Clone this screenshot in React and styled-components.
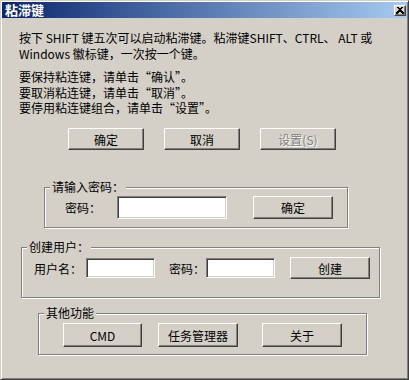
import styled, { createGlobalStyle } from "styled-components";

const GlobalStyle = createGlobalStyle`
  html, body { margin: 0; padding: 0; background: #d4d0c8; }
  body {
    font-family: "Noto Sans CJK SC", "Liberation Sans", sans-serif;
    font-size: 12px;
    color: #000;
  }
`;

const Window = styled.div`
  width: 409px;
  height: 380px;
  box-sizing: border-box;
  background: #d4d0c8;
  border: 1px solid;
  border-color: #d4d0c8 #404040 #404040 #d4d0c8;
  box-shadow: inset 1px 1px #fff, inset -1px -1px #808080;
  padding: 1px;
  display: flex;
  flex-direction: column;
`;

const TitleBar = styled.div`
  height: 16px;
  display: flex;
  align-items: center;
  justify-content: space-between;
  padding: 0 1px 0 3px;
  background: linear-gradient(90deg, #0a246a 0%, #3a5a98 30%, #a6caf0 100%);
`;

const Title = styled.span`
  color: #fff;
  font-weight: bold;
  font-size: 13px;
  line-height: 16px;
`;

const CloseButton = styled.div`
  width: 12px;
  height: 11px;
  box-sizing: border-box;
  background: #d4d0c8;
  border: 1px solid;
  border-color: #fff #404040 #404040 #fff;
  box-shadow: inset -1px -1px #808080;
  display: flex;
  align-items: center;
  justify-content: center;
`;

const Body = styled.div`
  display: flex;
  flex-direction: column;
  padding-top: 12px;
`;

const Para = styled.p`
  margin: ${p => p.$mt || 0}px 0 0 17px;
  line-height: ${p => p.$lh}px;
  white-space: nowrap;
`;

const ButtonRow = styled.div`
  display: flex;
  gap: 20px;
  margin: 12.5px 0 0 66px;
`;

const Button = styled.button`
  width: ${p => p.$w}px;
  height: ${p => p.$h}px;
  margin-left: ${p => p.$ml || 0}px;
  flex-shrink: 0;
  box-sizing: border-box;
  padding: 0;
  font-family: inherit;
  font-size: 12px;
  color: ${p => (p.disabled ? "#808080" : "#000")};
  text-shadow: ${p => (p.disabled ? "1px 1px #fff" : "none")};
  background: #d4d0c8;
  border: 1px solid;
  border-color: #fff #404040 #404040 #fff;
  box-shadow: inset -1px -1px #808080;
`;

const Group = styled.div`
  position: relative;
  box-sizing: border-box;
  width: ${p => p.$w}px;
  margin: ${p => p.$mt}px 0 0 ${p => p.$ml}px;
  padding: ${p => p.$pt}px 0 ${p => p.$pb}px ${p => p.$pl}px;
  border: 1px solid #808080;
  box-shadow: inset 1px 1px #fff, 1px 1px #fff;
  display: flex;
  align-items: center;
`;

const GroupTitle = styled.span`
  position: absolute;
  top: -9px;
  left: 5px;
  padding: 0 2px;
  line-height: 16px;
  background: #d4d0c8;
  white-space: nowrap;
`;

const Label = styled.span`
  flex-shrink: 0;
  margin-left: ${p => p.$ml || 0}px;
  white-space: nowrap;
`;

const Input = styled.input`
  width: ${p => p.$w}px;
  height: ${p => p.$h}px;
  margin-left: ${p => p.$ml || 0}px;
  flex-shrink: 0;
  box-sizing: border-box;
  padding: 0 3px;
  font-family: inherit;
  font-size: 12px;
  background: #fff;
  border: 1px solid;
  border-color: #808080 #fff #fff #808080;
  box-shadow: inset 1px 1px #404040, inset -1px -1px #d4d0c8;
  outline: none;
`;

export default function App() {
  return (
    <>
      <GlobalStyle />
      <Window>
        <TitleBar>
          <Title>粘滞键</Title>
          <CloseButton>
            <svg width="8" height="7" viewBox="0 0 8 7">
              <path d="M1 0h2v1h2V0h2v1H6v1H5v1h1v1h1v1h1v2H6V6H5V5H3v1H2v1H0V5h1V4h1V3h1V2H2V1H1z" fill="#000" transform="translate(0 0)" />
            </svg>
          </CloseButton>
        </TitleBar>
        <Body>
          <Para $lh={16}>
            按下 SHIFT 键五次可以启动粘滞键。粘滞键SHIFT、CTRL、 ALT 或
            <br />
            Windows 徽标键，一次按一个键。
          </Para>
          <Para $lh={15.5} $mt={7}>
            要保持粘连键，请单击“确认”。
            <br />
            要取消粘连键，请单击“取消”。
            <br />
            要停用粘连键组合，请单击“设置”。
          </Para>
          <ButtonRow>
            <Button $w={76} $h={22}>确定</Button>
            <Button $w={76} $h={22}>取消</Button>
            <Button $w={76} $h={22} disabled>设置(S)</Button>
          </ButtonRow>

          <Group $w={304} $mt={37} $ml={42} $pt={8} $pb={8} $pl={20}>
            <GroupTitle>请输入密码：</GroupTitle>
            <Label>密码：</Label>
            <Input $w={110} $h={23} $ml={16} />
            <Button $w={80} $h={23} $ml={26}>确定</Button>
          </Group>

          <Group $w={359} $mt={19} $ml={19} $pt={9} $pb={18} $pl={12}>
            <GroupTitle>创建用户：</GroupTitle>
            <Label>用户名：</Label>
            <Input $w={69} $h={20} $ml={4} />
            <Label $ml={14}>密码：</Label>
            <Input $w={69} $h={20} $ml={1} />
            <Button $w={80} $h={22} $ml={15}>创建</Button>
          </Group>

          <Group $w={329} $mt={15} $ml={36} $pt={9} $pb={7} $pl={24}>
            <GroupTitle>其他功能</GroupTitle>
            <Button $w={79} $h={24}>CMD</Button>
            <Button $w={80} $h={24} $ml={16}>任务管理器</Button>
            <Button $w={80} $h={24} $ml={24}>关于</Button>
          </Group>
        </Body>
      </Window>
    </>
  );
}
